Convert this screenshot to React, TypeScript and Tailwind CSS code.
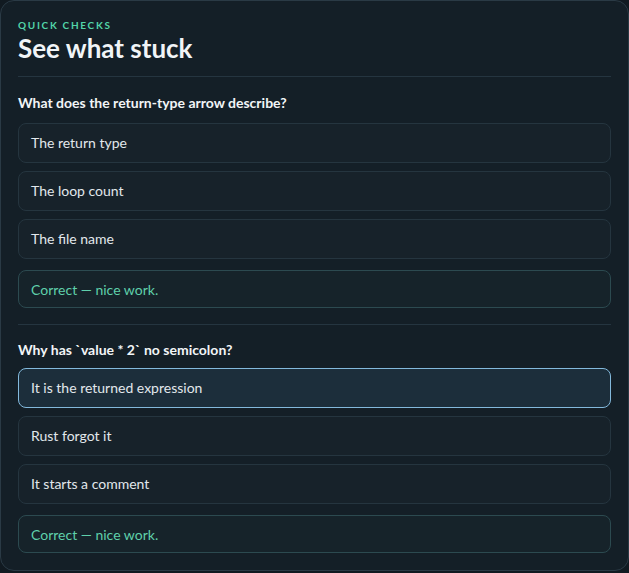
import { useState } from "react";

interface Question {
  prompt: string;
  options: string[];
  answer: number;
}

const questions: Question[] = [
  {
    prompt: "What does the return-type arrow describe?",
    options: ["The return type", "The loop count", "The file name"],
    answer: 0,
  },
  {
    prompt: "Why has `value * 2` no semicolon?",
    options: ["It is the returned expression", "Rust forgot it", "It starts a comment"],
    answer: 0,
  },
];

function QuestionBlock({ q, focused, first }: { q: Question; focused: boolean; first: boolean }) {
  const [picked] = useState<number | null>(q.answer);

  return (
    <div className={`border-t border-[#253540] ${first ? "pt-4 pb-4" : "pt-[15px]"}`}>
      <h3
        className={`text-[14px] font-bold leading-5 text-[#f2f5f7] ${first ? "mb-2.5" : "mb-2"}`}
      >
        {q.prompt}
      </h3>
      <div className="flex flex-col gap-2">
        {q.options.map((opt, i) => (
          <button
            key={opt}
            className={`h-[40px] rounded-lg border px-3 text-left text-[14px] leading-5 text-[#e2e8ec] ${
              focused && i === q.answer
                ? "border-[#83b9dc] bg-[#1c2e3b]"
                : "border-[#25353f] bg-[#17222a]"
            }`}
          >
            {opt}
          </button>
        ))}
      </div>
      {picked !== null && (
        <div className="mt-[11px] flex h-[38px] items-center rounded-lg border border-[#2c4a50] bg-[#16232a] px-3 text-[14px] text-[#5fd0ab]">
          Correct — nice work.
        </div>
      )}
    </div>
  );
}

export default function App() {
  return (
    <div className="min-h-screen bg-[#111a21] font-['Lato','Noto_Sans',sans-serif]">
      <section className="rounded-[14px] border border-[#2a3a45] bg-[#141f27] px-[17px] pt-[18px] pb-[17px]">
        <div className="pb-[11px]">
          <p className="text-[10px] font-bold uppercase leading-3 tracking-[0.17em] text-[#52d4a8]">
            Quick checks
          </p>
          <h2 className="text-[26px] font-bold leading-[34px] text-[#f1f4f7]">
            See what stuck
          </h2>
        </div>
        {questions.map((q, i) => (
          <QuestionBlock key={q.prompt} q={q} focused={i === 1} first={i === 0} />
        ))}
      </section>
    </div>
  );
}
